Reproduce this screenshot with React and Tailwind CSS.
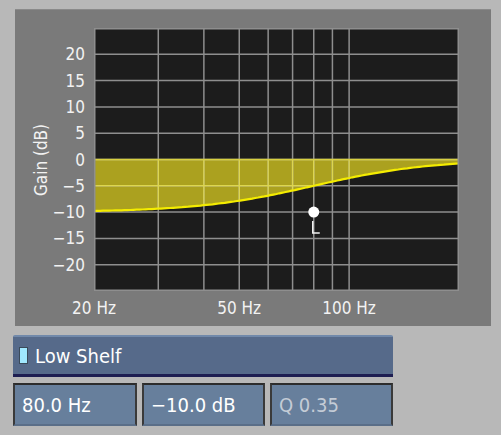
import React from 'react';

const FONT = { fontFamily: '"DejaVu Sans Condensed", "DejaVu Sans", sans-serif', fontStretch: 'condensed' };

// plot geometry (px inside the svg)
const W = 365;
const H = 263;
const DB_MAX = 25;
const DB_RANGE = 50;
const FREQS = [30, 40, 50, 60, 70, 80, 90, 100];
const DBS = [20, 15, 10, 5, 0, -5, -10, -15, -20];

const xOf = (f) => (Math.log10(f / 20) / 1) * W;
const yOf = (db) => ((DB_MAX - db) / DB_RANGE) * H;

function shelfGain(f) {
  return -10 / (1 + Math.pow(f / 80, 2.73));
}

function curvePoints() {
  const pts = [];
  for (let i = 0; i <= 120; i++) {
    const f = 20 * Math.pow(10, i / 120);
    pts.push([xOf(f), yOf(shelfGain(f))]);
  }
  return pts;
}

function Plot() {
  const pts = curvePoints();
  const line = pts.map(([x, y], i) => `${i ? 'L' : 'M'}${x.toFixed(1)},${y.toFixed(1)}`).join(' ');
  const zero = yOf(0);
  const fill = `M0,${zero} ${pts.map(([x, y]) => `L${x.toFixed(1)},${y.toFixed(1)}`).join(' ')} L${W},${zero} Z`;
  const px = xOf(80);
  const py = yOf(-10);

  return (
    <svg width={W} height={H} viewBox={`0 0 ${W} ${H}`} className="block">
      <defs>
        <clipPath id="shelf">
          <path d={fill} />
        </clipPath>
      </defs>
      <rect x="0" y="0" width={W} height={H} fill="#1c1c1c" />
      <path d={fill} fill="#aba11f" />
      <g stroke="#8e8e8e" strokeWidth="1.5">
        {FREQS.map((f) => (
          <line key={f} x1={xOf(f)} y1="0" x2={xOf(f)} y2={H} />
        ))}
        {DBS.map((d) => (
          <line key={d} x1="0" y1={yOf(d)} x2={W} y2={yOf(d)} />
        ))}
      </g>
      <g stroke="#ddd650" strokeWidth="1.5" clipPath="url(#shelf)">
        {FREQS.map((f) => (
          <line key={f} x1={xOf(f)} y1="0" x2={xOf(f)} y2={H} />
        ))}
        {DBS.map((d) => (
          <line key={d} x1="0" y1={yOf(d)} x2={W} y2={yOf(d)} />
        ))}
      </g>
      <line x1="0" y1={zero} x2={W} y2={zero} stroke="#d8d040" strokeWidth="1.5" />
      <path d={line} fill="none" stroke="#f4ec00" strokeWidth="2.2" />
      <rect x="0.75" y="0.75" width={W - 1.5} height={H - 1.5} fill="none" stroke="#8e8e8e" strokeWidth="1.5" />
      <circle cx={px} cy={py} r="5.5" fill="#ffffff" />
      <path d={`M${px - 1},${py + 9} V${py + 21} H${px + 6}`} fill="none" stroke="#f0f0f0" strokeWidth="1.5" />
    </svg>
  );
}

function Chart() {
  // panel-relative offsets of the plot
  const left = 79;
  const top = 18;
  return (
    <div className="relative w-[476px] h-[317px] bg-[#7a7a7a] border-t border-[#8a8a8a] text-[#f2f2f2] text-[17px]" style={FONT}>
      <div className="absolute" style={{ left, top }}>
        <Plot />
      </div>
      {DBS.map((d) => (
        <span
          key={d}
          className="absolute w-[40px] text-right leading-none"
          style={{ left: 30, top: top + yOf(d) - 8 }}
        >
          {d < 0 ? `−${-d}` : d}
        </span>
      ))}
      <span className="absolute left-[26px] top-[150px] -translate-x-1/2 -translate-y-1/2 -rotate-90 whitespace-nowrap leading-none">
        Gain (dB)
      </span>
      {[
        [20, '20 Hz'],
        [50, '50 Hz'],
        [100, '100 Hz'],
      ].map(([f, label]) => (
        <span
          key={f}
          className="absolute -translate-x-1/2 whitespace-nowrap leading-none"
          style={{ left: left + xOf(f), top: 290 }}
        >
          {label}
        </span>
      ))}
    </div>
  );
}

function ValueBox({ children, dim }) {
  return (
    <div
      className={`h-[43px] flex items-center pl-[7px] bg-[#677f9c] border-2 border-t-[#2c2c2c] border-l-[#3a3a3a] border-r-[#3a3a3a] border-b-[#5a6e88] text-[20px] ${
        dim ? 'text-[#c4ccd6]' : 'text-white'
      }`}
    >
      {children}
    </div>
  );
}

export default function App() {
  return (
    <div className="w-[501px] h-[435px] bg-[#b8b8b8] pt-[9px] overflow-hidden" style={FONT}>
      <div className="ml-[15px]">
        <Chart />
      </div>
      <div className="ml-[13px] mt-[9px] w-[380px] flex flex-col gap-[6px]">
        <div className="h-[42px] flex items-center gap-[7px] pl-[6px] bg-[#566a8a] border-t-2 border-t-[#7189aa] border-b-[3px] border-b-[#1e1e52] rounded-t-[2px] text-white text-[20px]">
          <span className="w-[9px] h-[17px] bg-[#a0e8ff] border border-[#3a4a5a]" />
          Low Shelf
        </div>
        <div className="grid grid-cols-[124px_123px_123px] gap-[5px]">
          <ValueBox>80.0 Hz</ValueBox>
          <ValueBox>−10.0 dB</ValueBox>
          <ValueBox dim>Q 0.35</ValueBox>
        </div>
      </div>
    </div>
  );
}
